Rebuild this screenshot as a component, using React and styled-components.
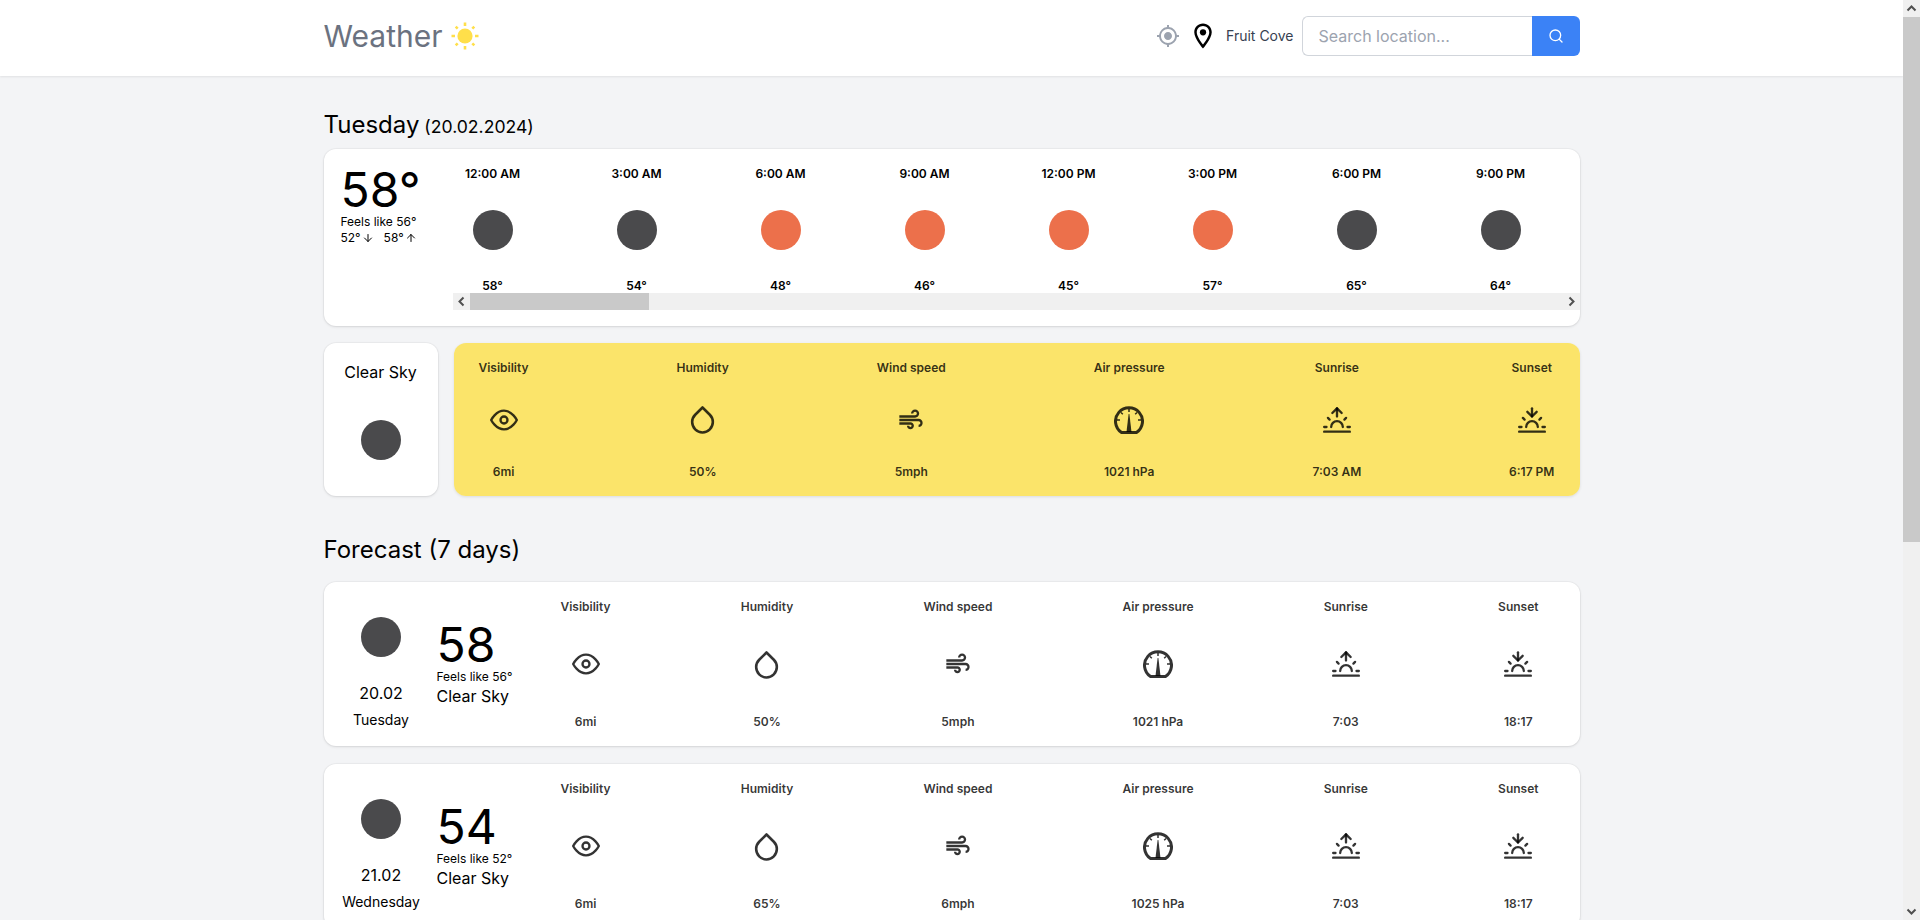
import React from 'react'
import styled, { createGlobalStyle, css } from 'styled-components'
import { FiEye, FiDroplet, FiSunrise, FiSunset, FiSearch, FiArrowDown, FiArrowUp } from 'react-icons/fi'
import { MdAir, MdMyLocation, MdOutlineLocationOn } from 'react-icons/md'

const DARK = '#4a4a4c'
const ORANGE = '#ec704b'

const GlobalStyle = createGlobalStyle`
  html {
    overflow: hidden;
  }
  body {
    margin: 0;
    padding-right: 17px;
    background: #f3f4f6;
    color: #000;
    font-family: Inter, "Liberation Sans", sans-serif;
  }
  * {
    box-sizing: border-box;
  }
`

const Nav = styled.header`
  background: #fff;
  height: 76px;
  padding-bottom: 4px;
  box-shadow: 0 1px 2px rgba(0, 0, 0, 0.08);
`

const Container = styled.div`
  max-width: 1280px;
  margin: 0 auto;
  padding: 0 12px;
`

const NavInner = styled(Container)`
  height: 100%;
  display: flex;
  align-items: center;
  justify-content: space-between;
`

const Logo = styled.div`
  display: flex;
  align-items: center;
  gap: 8px;
  font-size: 30px;
  line-height: 36px;
  color: #6b7280;
`

const NavRight = styled.div`
  display: flex;
  align-items: center;
  gap: 8px;
`

const TargetBtn = styled.span`
  display: flex;
  color: #9ca3af;
  font-size: 24px;
`

const PinBtn = styled.span`
  display: flex;
  font-size: 30px;
`

const PlaceName = styled.span`
  font-size: 14px;
  line-height: 20px;
  color: #374151;
`

const SearchBox = styled.form`
  display: flex;
  height: 40px;
`

const SearchInput = styled.input`
  width: 230px;
  height: 40px;
  padding: 0 16px;
  border: 1px solid #d1d5db;
  border-right: 0;
  border-radius: 6px 0 0 6px;
  font: 16px Inter, sans-serif;
  outline: none;
  &::placeholder {
    color: #9ca3af;
    opacity: 1;
  }
`

const SearchBtn = styled.button`
  width: 48px;
  height: 40px;
  border: 0;
  padding: 0;
  background: #3b82f6;
  color: #fff;
  border-radius: 0 6px 6px 0;
  display: flex;
  align-items: center;
  justify-content: center;
  font-size: 16px;
`

const Main = styled(Container)`
  padding-top: 33px;
  padding-bottom: 80px;
`

const Heading = styled.h2`
  margin: 0 0 8px;
  font-size: 24px;
  line-height: 32px;
  font-weight: 400;
`

const ForecastHeading = styled(Heading)`
  margin: 38px 0 16px;
`

const DateNote = styled.span`
  font-size: 17.6px;
  line-height: 1;
`

const card = css`
  background: #fff;
  border-radius: 12px;
  box-shadow: 0 0 0 1px rgba(0, 0, 0, 0.03), 0 1px 3px rgba(0, 0, 0, 0.1);
`

const TodayCard = styled.section`
  ${card}
  display: flex;
  height: 177px;
  padding: 16px 0 16px 16px;
  margin-bottom: 17px;
`

const NowCol = styled.div`
  width: 113px;
  flex: none;
  padding: 1px 0 0 1px;
  font-size: 12px;
  line-height: 16px;
`

const BigTemp = styled.div`
  font-size: 48px;
  line-height: 48px;
`

const LowHigh = styled.div`
  display: flex;
  gap: 10px;
`

const TempArrow = styled.span`
  display: inline-flex;
  align-items: center;
  gap: 1px;
`

const HourStrip = styled.div`
  flex: 1;
  min-width: 0;
`

const Hours = styled.div`
  display: flex;
  gap: 64px;
  height: 129px;
  padding-top: 1px;
  overflow: hidden;
`

const Hour = styled.div`
  flex: none;
  width: 80px;
  display: flex;
  flex-direction: column;
  align-items: center;
  justify-content: space-between;
  font-size: 12px;
  line-height: 16px;
  font-weight: 600;
`

const Dot = styled.div`
  width: 40px;
  height: 40px;
  border-radius: 50%;
  flex: none;
  background: ${p => p.$color};
`

// the shot has the native bars of a desktop browser, headless shows none
const Bar = styled.div`
  display: flex;
  flex-direction: ${p => (p.$vertical ? 'column' : 'row')};
  justify-content: space-between;
  background: #f0f0f0;
  ${p => (p.$vertical ? 'width: 17px;' : 'height: 17px; margin-top: -1px;')}
`

const PageBar = styled(Bar)`
  position: fixed;
  top: 0;
  right: 0;
  bottom: 0;
`

const BarEnd = styled.svg`
  flex: none;
  display: block;
  width: 17px;
  height: 17px;
  fill: none;
  stroke: #505050;
  stroke-width: 2;
`

const Thumb = styled.div`
  flex: none;
  background: #c9c9c9;
  ${p => (p.$vertical ? `height: ${p.$size}px;` : `width: ${p.$size}px;`)}
  margin-${p => (p.$vertical ? 'bottom' : 'right')}: auto;
`

const Row = styled.div`
  display: flex;
  gap: 16px;
`

const SkyCard = styled.section`
  ${card}
  width: 114px;
  height: 153px;
  flex: none;
  display: flex;
  flex-direction: column;
  align-items: center;
  padding-top: 17px;
  font-size: 16px;
  line-height: 24px;
  gap: 36px;
`

const Details = styled.section`
  flex: 1;
  height: 153px;
  display: flex;
  justify-content: space-between;
  padding: 17px 25px 16px;
  border-radius: 12px;
  background: rgba(253, 224, 71, 0.8);
  box-shadow: 0 1px 3px rgba(0, 0, 0, 0.1);
  color: rgba(0, 0, 0, 0.8);
`

const Detail = styled.div`
  display: flex;
  flex-direction: column;
  align-items: center;
  justify-content: space-between;
  font-size: 12px;
  line-height: 16px;
  font-weight: 600;
  white-space: nowrap;
  svg {
    display: block;
    font-size: 28px;
  }
`

const Drop = styled(FiDroplet)`
  && {
    font-size: 31px;
    margin: -2px 0 -1px;
  }
`

const DayCard = styled.section`
  ${card}
  display: flex;
  height: 164px;
  padding: 17px 41px 16px 16px;
  margin-bottom: 18px;
`

const DayCol = styled.div`
  width: 83px;
  flex: none;
  display: flex;
  flex-direction: column;
  align-items: center;
  justify-content: flex-end;
`

const DayDate = styled.div`
  margin-top: 24px;
  font-size: 16px;
  line-height: 24px;
`

const DayName = styled.div`
  margin-top: 5px;
  font-size: 14px;
  line-height: 20px;
`

const TempCol = styled.div`
  width: 124px;
  flex: none;
  margin-left: 14px;
  padding-bottom: 2px;
  display: flex;
  flex-direction: column;
  justify-content: center;
`

const DayTemp = styled.div`
  font-size: 48px;
  line-height: 48px;
`

const Feels = styled.div`
  font-size: 12px;
  line-height: 16px;
`

const DaySky = styled.div`
  font-size: 16px;
  line-height: 22px;
`

const DayDetails = styled.div`
  flex: 1;
  display: flex;
  justify-content: space-between;
  color: rgba(0, 0, 0, 0.8);
  svg {
    margin-bottom: 1px;
  }
`

const hours = [
  ['12:00 AM', DARK, 58],
  ['3:00 AM', DARK, 54],
  ['6:00 AM', ORANGE, 48],
  ['9:00 AM', ORANGE, 46],
  ['12:00 PM', ORANGE, 45],
  ['3:00 PM', ORANGE, 57],
  ['6:00 PM', DARK, 65],
  ['9:00 PM', DARK, 64],
]

const days = [
  { date: '20.02', name: 'Tuesday', temp: 58, feels: 56, vis: '6mi', hum: '50%', wind: '5mph', air: '1021 hPa' },
  { date: '21.02', name: 'Wednesday', temp: 54, feels: 52, vis: '6mi', hum: '65%', wind: '6mph', air: '1025 hPa' },
]

const SunLogo = () => (
  <svg width="28" height="28" viewBox="0 0 28 28" fill="#ffdf4a">
    <circle cx="14" cy="14" r="7.6" />
    <path
      stroke="#ffdf4a"
      strokeWidth="2.6"
      d="M14 .5v3.500M14 24v3.500M.5 14h3.500M24 14h3.500M4.700 4.700l2 2M21.300 21.300l2 2M4.700 23.300l2-2M21.300 6.700l2-2"
    />
  </svg>
)

const Gauge = () => (
  <svg width="30" height="28" viewBox="0 0 30 28" fill="none" stroke="currentColor">
    <path strokeWidth="3" d="M7.500 26.500A13.500 13.500 0 1 1 22.500 26.500Z" />
    <path fill="currentColor" stroke="none" d="M14.600 8h.8l2.100 18h-5z" />
    <path strokeWidth="1.500" d="M15 3v3M7 6.500l1.800 1.800M23 6.500l-1.800 1.800M3 14h3M24 14h3" />
  </svg>
)

const DetailList = ({ vis, hum, wind, air, rise, set }) => {
  const items = [
    ['Visibility', <FiEye />, vis],
    ['Humidity', <Drop />, hum],
    ['Wind speed', <MdAir />, wind],
    ['Air pressure', <Gauge />, air],
    ['Sunrise', <FiSunrise />, rise],
    ['Sunset', <FiSunset />, set],
  ]
  return items.map(([label, icon, value]) => (
    <Detail key={label}>
      <span>{label}</span>
      {icon}
      <span>{value}</span>
    </Detail>
  ))
}

const App = () => (
  <>
    <GlobalStyle />
    <Nav>
      <NavInner>
        <Logo>
          Weather <SunLogo />
        </Logo>
        <NavRight>
          <TargetBtn><MdMyLocation /></TargetBtn>
          <PinBtn><MdOutlineLocationOn /></PinBtn>
          <PlaceName>Fruit Cove</PlaceName>
          <SearchBox>
            <SearchInput placeholder="Search location..." />
            <SearchBtn type="button"><FiSearch /></SearchBtn>
          </SearchBox>
        </NavRight>
      </NavInner>
    </Nav>
    <Main>
      <Heading>Tuesday<DateNote> (20.02.2024)</DateNote></Heading>
      <TodayCard>
        <NowCol>
          <BigTemp>58°</BigTemp>
          <div>Feels like 56°</div>
          <LowHigh>
            <TempArrow>52°<FiArrowDown /></TempArrow>
            <TempArrow>58°<FiArrowUp /></TempArrow>
          </LowHigh>
        </NowCol>
        <HourStrip>
          <Hours>
            {hours.map(([time, color, temp]) => (
              <Hour key={time}>
                <span>{time}</span>
                <Dot $color={color} />
                <span>{temp}°</span>
              </Hour>
            ))}
          </Hours>
          <Bar>
            <BarEnd viewBox="0 0 17 17"><path d="M10.500 4.500l-4 4 4 4" /></BarEnd>
            <Thumb $size={179} />
            <BarEnd viewBox="0 0 17 17"><path d="M6.500 4.500l4 4-4 4" /></BarEnd>
          </Bar>
        </HourStrip>
      </TodayCard>
      <Row>
        <SkyCard>
          <span>Clear Sky</span>
          <Dot $color={DARK} />
        </SkyCard>
        <Details>
          <DetailList vis="6mi" hum="50%" wind="5mph" air="1021 hPa" rise="7:03 AM" set="6:17 PM" />
        </Details>
      </Row>
      <ForecastHeading>Forecast (7 days)</ForecastHeading>
      {days.map(d => (
        <DayCard key={d.date}>
          <DayCol>
            <Dot $color={DARK} />
            <DayDate>{d.date}</DayDate>
            <DayName>{d.name}</DayName>
          </DayCol>
          <TempCol>
            <DayTemp>{d.temp}</DayTemp>
            <Feels>Feels like {d.feels}°</Feels>
            <DaySky>Clear Sky</DaySky>
          </TempCol>
          <DayDetails>
            <DetailList vis={d.vis} hum={d.hum} wind={d.wind} air={d.air} rise="7:03" set="18:17" />
          </DayDetails>
        </DayCard>
      ))}
    </Main>
    <PageBar $vertical>
      <BarEnd viewBox="0 0 17 17"><path d="M4.500 10.500l4-4 4 4" /></BarEnd>
      <Thumb $vertical $size={525} />
      <BarEnd viewBox="0 0 17 17"><path d="M4.500 6.500l4 4 4-4" /></BarEnd>
    </PageBar>
  </>
)

export default App
